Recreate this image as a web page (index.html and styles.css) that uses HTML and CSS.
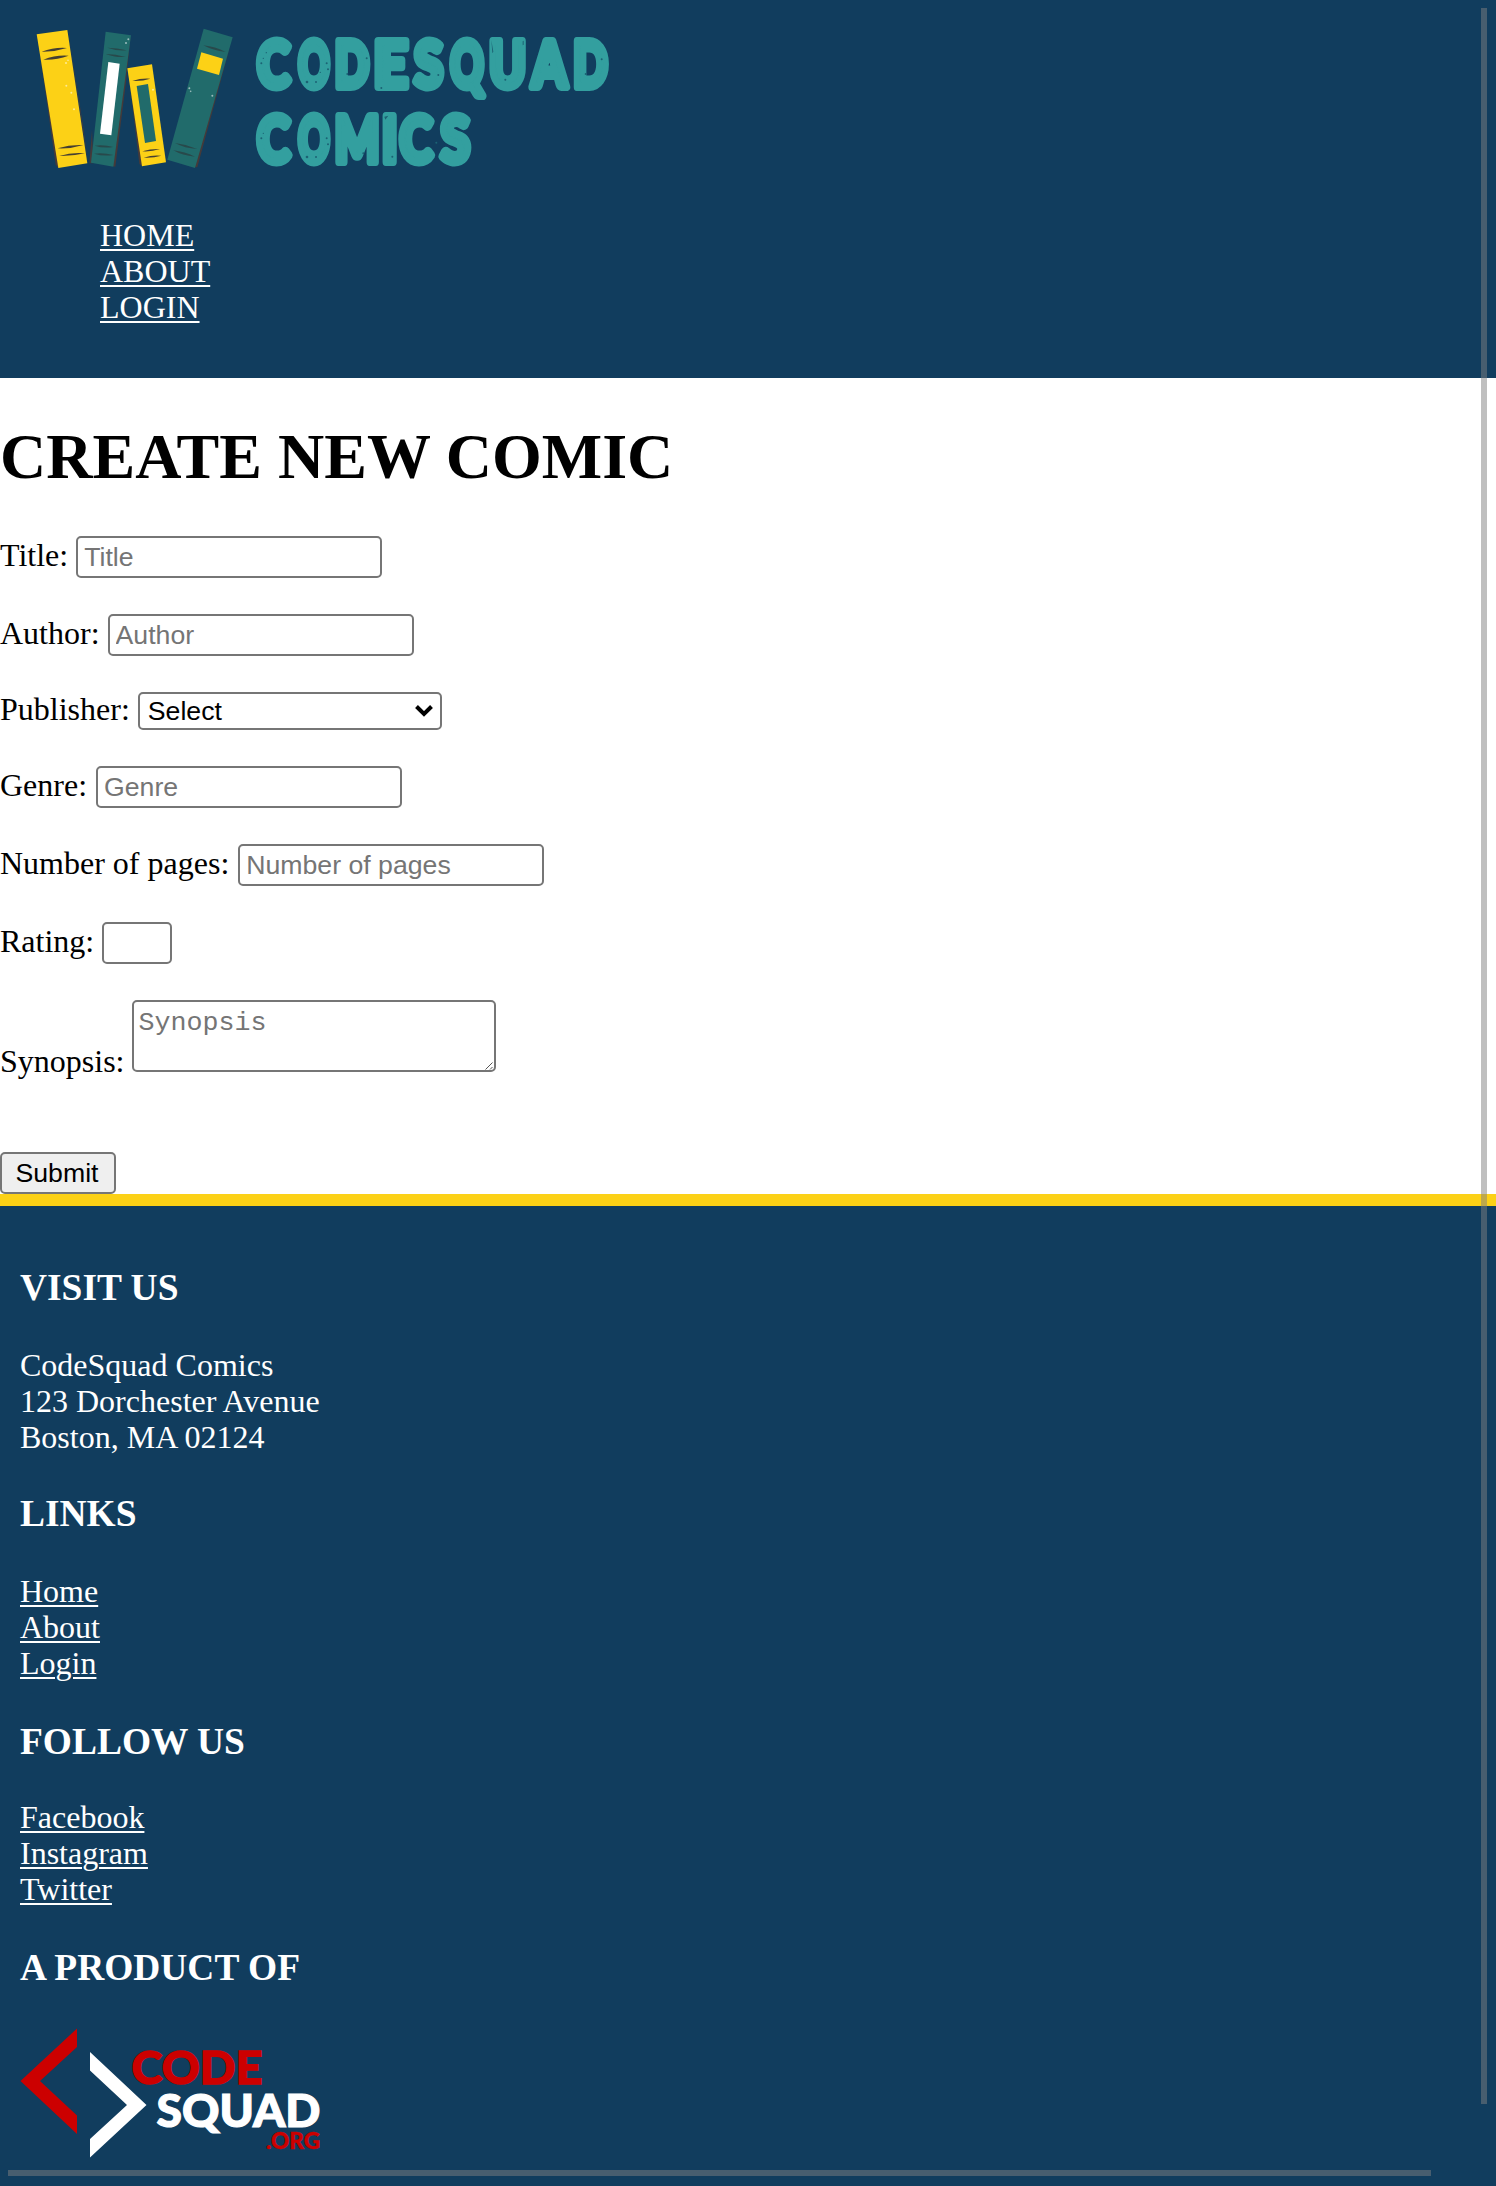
FILE: index.html
```html
<!DOCTYPE html>
<html lang="en">
<head>
<meta charset="utf-8">
<title>CodeSquad Comics</title>
<link rel="stylesheet" href="styles.css">
</head>
<body>
<header class="site-header">
  <svg class="logo" viewBox="0 0 1920 600" role="img" aria-label="CodeSquad Comics">
    <g fill="#453a3a">
      <path d="M112 106l55 388 8 10-10-120zM204 92l60 400-14-110z"/>
      <path d="M392 106l-14 140-32 254-10-2zM268 490l8-100 4 100zM384 206l34 286 8 6-10-100zM690 140l-98 362-8 0 50-180z"/>
    </g>
    <path fill="#fcd116" d="M110 103l92-13 60 400-87 14z"/>
    <path fill="#216b6b" d="M317 95l76 11-53 394-67-12z"/>
    <path fill="#fff" d="M325 186l34 5-25 215-34-5z"/>
    <path fill="#fcd116" d="M382 205l74-12 42 294-72 12z"/>
    <path fill="#216b6b" d="M410 258l34-6 24 171-33 6z"/>
    <path fill="#216b6b" d="M611 86l87 26-113 392-83-25z"/>
    <path fill="#fcd116" d="M604 157l65 19-12 49-66-19z"/>
    <g fill="#453f32">
      <path d="M125 155q38-14 76-11-38 12-76 11zM130 179q38-15 76-12-38 14-76 12zM173 445q38-12 77-10-38 12-77 10zM178 468q38-12 77-8-38 9-77 8z"/>
      <path d="M397 243q26-9 54-7-26 9-54 7zM427 454q26-8 53-7-26 9-53 7zM431 473q26-9 53-6-26 8-53 6z"/>
      <path fill="#28494b" d="M322 143q30 0 58 8-32 2-58-8zM317 162q30 0 60 9-34 2-60-9zM284 437q30-3 56 4-30 5-56-4zM282 461q30-3 58 4-30 5-58-4zM610 136q36 4 67 20-38-4-67-20zM525 429q34 4 67 18-38-2-67-18zM520 451q34 4 65 19-38-3-65-19z"/>
    </g>
    <g fill="#fff" opacity=".55">
      <circle cx="198" cy="189" r="3"/><circle cx="204" cy="181" r="2.5"/><circle cx="199" cy="257" r="3"/><circle cx="214" cy="278" r="3"/><circle cx="222" cy="328" r="3"/>
      <circle cx="385" cy="118" r="3"/><circle cx="378" cy="129" r="3"/><circle cx="459" cy="269" r="3"/><circle cx="568" cy="265" r="3"/><circle cx="572" cy="274" r="2.5"/><circle cx="637" cy="287" r="3"/>
    </g>
    <g class="wordmark">
      <text y="262"><tspan x="772" textLength="98" lengthAdjust="spacingAndGlyphs">C</tspan><tspan x="895" textLength="94" lengthAdjust="spacingAndGlyphs">O</tspan><tspan x="1004" textLength="103" lengthAdjust="spacingAndGlyphs">D</tspan><tspan x="1121" textLength="102" lengthAdjust="spacingAndGlyphs">E</tspan><tspan x="1243" textLength="86" lengthAdjust="spacingAndGlyphs">S</tspan><tspan x="1351" textLength="100" lengthAdjust="spacingAndGlyphs">Q</tspan><tspan x="1468" textLength="110" lengthAdjust="spacingAndGlyphs">U</tspan><tspan x="1596" textLength="104" lengthAdjust="spacingAndGlyphs">A</tspan><tspan x="1720" textLength="103" lengthAdjust="spacingAndGlyphs">D</tspan></text>
      <text y="487"><tspan x="772" textLength="98" lengthAdjust="spacingAndGlyphs">C</tspan><tspan x="895" textLength="94" lengthAdjust="spacingAndGlyphs">O</tspan><tspan x="1004" textLength="134" lengthAdjust="spacingAndGlyphs">M</tspan><tspan x="1146" textLength="46" lengthAdjust="spacingAndGlyphs">I</tspan><tspan x="1199" textLength="98" lengthAdjust="spacingAndGlyphs">C</tspan><tspan x="1322" textLength="87" lengthAdjust="spacingAndGlyphs">S</tspan></text>
    </g>
    <g fill="#1c6374">
      <circle cx="790" cy="175" r="2"/><circle cx="784" cy="190" r="3"/><circle cx="799" cy="158" r="2"/><circle cx="921" cy="246" r="4"/><circle cx="948" cy="246" r="3"/><circle cx="980" cy="190" r="3"/><circle cx="984" cy="208" r="3"/><circle cx="961" cy="217" r="2"/><circle cx="1042" cy="222" r="3"/><circle cx="1100" cy="175" r="3"/><circle cx="1144" cy="264" r="3"/><circle cx="1315" cy="225" r="3"/><circle cx="1516" cy="239" r="3"/><circle cx="1757" cy="222" r="3"/><circle cx="1805" cy="178" r="3"/>
      <circle cx="790" cy="400" r="2"/><circle cx="784" cy="415" r="3"/><circle cx="921" cy="471" r="4"/><circle cx="948" cy="471" r="3"/><circle cx="980" cy="415" r="3"/><circle cx="984" cy="433" r="3"/><circle cx="1090" cy="460" r="3"/><circle cx="1177" cy="470" r="3"/><circle cx="1309" cy="428" r="3"/>
      <path d="M1474 120l6 35-3 5zM1568 124l3-2 0 12-3 2zM1153 350l12-3-9 12z"/>
    </g>
  </svg>
  <nav class="main-nav">
    <a href="#">HOME</a>
    <a href="#">ABOUT</a>
    <a href="#">LOGIN</a>
  </nav>
</header>

<main>
  <h1>CREATE NEW COMIC</h1>
  <form>
    <div class="field"><label for="title">Title:</label><input id="title" placeholder="Title"></div>
    <div class="field"><label for="author">Author:</label><input id="author" placeholder="Author"></div>
    <div class="field field-select"><label for="publisher">Publisher:</label>
      <div class="select">
        <select id="publisher"><option>Select</option></select>
        <svg class="chevron" viewBox="0 0 20 14"><path d="M2.5 2.5l7.500 7.500 7.500-7.500" fill="none" stroke="#000" stroke-width="4"/></svg>
      </div>
    </div>
    <div class="field field-wide"><label for="genre">Genre:</label><input id="genre" placeholder="Genre"></div>
    <div class="field field-wide"><label for="pages">Number of pages:</label><input id="pages" placeholder="Number of pages"></div>
    <div class="field"><label for="rating">Rating:</label><input id="rating" class="short"></div>
    <div class="field field-area"><label for="synopsis">Synopsis:</label>
      <div class="area">
        <textarea id="synopsis" placeholder="Synopsis"></textarea>
        <svg class="grip" viewBox="0 0 8 8"><path d="M.5 7.500l7-7M5 7.500l2.500-2.500" stroke="#555" fill="none"/></svg>
      </div>
    </div>
    <button type="button">Submit</button>
  </form>
</main>

<footer class="site-footer">
  <section class="visit">
    <h3>VISIT US</h3>
    <address>CodeSquad Comics<br>123 Dorchester Avenue<br>Boston, MA 02124</address>
  </section>
  <section class="links">
    <h3>LINKS</h3>
    <a href="#">Home</a>
    <a href="#">About</a>
    <a href="#">Login</a>
  </section>
  <section class="follow">
    <h3>FOLLOW US</h3>
    <a href="#">Facebook</a>
    <a href="#">Instagram</a>
    <a href="#">Twitter</a>
  </section>
  <section class="product">
    <h3>A PRODUCT OF</h3>
    <svg class="org-logo" viewBox="20 2026 302 134" role="img" aria-label="CodeSquad.org">
      <path fill="#c00" d="M77 2028.500v18.500l-37 34 37 34.500v18.500l-56.500-53z"/>
      <path fill="#fff" d="M90 2052v18.500l37 34.500-37 34v18.500l56.500-52.500z"/>
      <g class="org-text">
        <text class="red" x="131.500" y="2084" font-size="45.500" textLength="131" lengthAdjust="spacingAndGlyphs">CODE</text>
        <text class="white" x="156.500" y="2126.500" font-size="45.500" textLength="164" lengthAdjust="spacingAndGlyphs">SQUAD</text>
        <text class="red small" x="266" y="2148.500" font-size="22" textLength="54" lengthAdjust="spacingAndGlyphs">.ORG</text>
      </g>
    </svg>
  </section>
</footer>
<div class="scroll-y"></div>
<div class="scroll-x"></div>
</body>
</html>
```

FILE: styles.css
```css
* { box-sizing: border-box; }
html { background: #113d5e; overflow: hidden; }
body {
  margin: 0;
  font: 32px/36px "Liberation Serif", "Times New Roman", serif;
  color: #000;
  background: #fff;
}
a {
  display: block;
  width: fit-content;
  color: #fff;
  text-decoration-thickness: 2px;
  text-underline-offset: 3px;
}

.site-header { height: 378px; background: #113d5e; }
.logo { display: block; width: 640px; height: 200px; }
.wordmark {
  font: 900 186px Lato, sans-serif;
  fill: #339f9f;
  stroke: #339f9f;
  stroke-width: 24px;
  stroke-linejoin: round;
}
.main-nav { padding: 17px 0 0 100px; }

h1 {
  margin: 0;
  padding-top: 42px;
  height: 158px;
  font-size: 64px;
  line-height: 74px;
}
.field {
  display: flex;
  align-items: baseline;
  gap: 8px;
  height: 42px;
  margin-bottom: 36px;
}
.field label { line-height: 30px; white-space: nowrap; }
.field-select { height: 38px; }
.field-wide { gap: 9px; }
.field-area { height: 72px; margin-bottom: 80px; align-items: flex-end; }
.field-area label { margin-bottom: -4px; }
input, select, textarea {
  display: block;
  margin: 0;
  border: 2px solid #767676;
  border-radius: 5px;
  background: #fff;
  color: #000;
  font: 26.667px "Liberation Sans", Arial, sans-serif;
}
input { width: 306px; height: 42px; padding: 2px 6px; }
input::placeholder, textarea::placeholder { color: #757575; }
.short { width: 70px; }
.select, .area { position: relative; }
select { width: 304px; height: 38px; padding: 0 8px; appearance: none; }
.chevron { position: absolute; right: 8px; top: 12px; width: 20px; height: 14px; }
textarea {
  width: 364px;
  height: 72px;
  padding: 6px 4px;
  resize: none;
  overflow: hidden;
  font: 26.667px/30px "Liberation Mono", "Courier New", monospace;
}
.grip { position: absolute; right: 3px; bottom: 2px; width: 8px; height: 8px; }
button {
  display: block;
  width: 116px;
  height: 42px;
  padding: 0 2px 0 0;
  border: 2px solid #767676;
  border-radius: 5px;
  background: #efefef;
  color: #000;
  font: 26.667px "Liberation Sans", Arial, sans-serif;
}

.site-footer {
  height: 992px;
  padding: 60px 20px 0;
  border-top: 12px solid #fcd116;
  background: #113d5e;
  color: #fff;
}
h3 { margin: 0 0 38px; font-size: 37.44px; line-height: 43px; }
address { font-style: normal; }
.visit { height: 226px; }
.links { height: 228px; }
.follow { height: 226px; }
.follow h3 { margin-bottom: 36px; }
.product h3 { margin-bottom: 37px; }
.org-logo { display: block; width: 302px; height: 134px; }
.org-text { font-family: Lato, sans-serif; font-weight: 900; }
.red { fill: #c00; stroke: #c00; stroke-width: 1.4px; }
.white { fill: #fff; stroke: #fff; stroke-width: 1.2px; }
.small { stroke-width: .5px; }

.scroll-y, .scroll-x { position: absolute; background: rgba(128, 128, 128, .5); }
.scroll-y { left: 1481px; top: 8px; width: 6px; height: 2096px; }
.scroll-x { left: 8px; top: 2170px; width: 1423px; height: 6px; }
```
